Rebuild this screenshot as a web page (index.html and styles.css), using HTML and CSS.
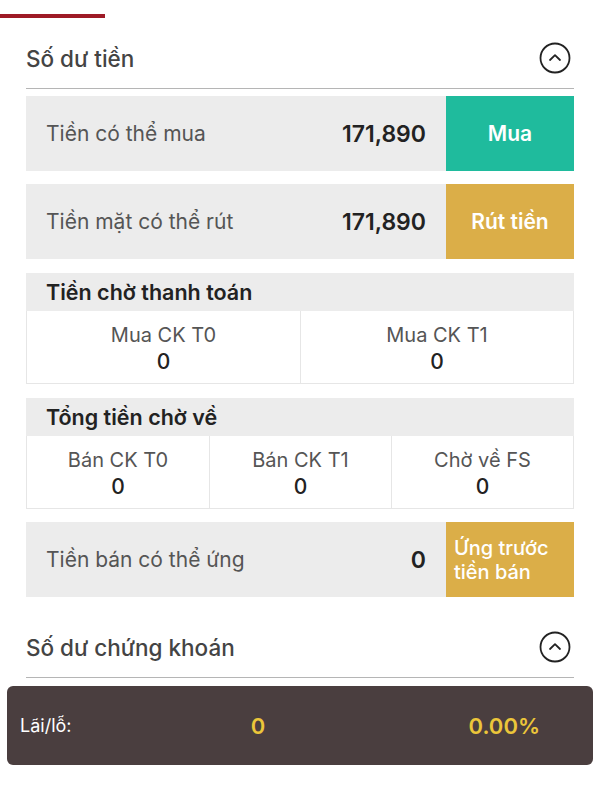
FILE: index.html
```html
<!DOCTYPE html>
<html lang="vi">
<head>
    <meta charset="UTF-8">
    <meta name="viewport" content="width=device-width, initial-scale=1.0">
    <title>Số dư tiền</title>
    <link rel="stylesheet" href="styles.css">
</head>
<body>
    <div class="tab-line"></div>

    <div class="section">
        <div class="section-head">
            <span>Số dư tiền</span>
            <svg class="toggle" width="32" height="32" viewBox="0 0 32 32">
                <circle cx="16" cy="16" r="14.5" fill="none" stroke="#222" stroke-width="1.8"/>
                <path d="M11 18 L16 13.2 L21 18" fill="none" stroke="#222" stroke-width="1.8" stroke-linecap="round" stroke-linejoin="round"/>
            </svg>
        </div>

        <div class="row">
            <div class="row-label">Tiền có thể mua</div>
            <div class="row-amount">171,890</div>
            <button class="btn btn-buy">Mua</button>
        </div>

        <div class="row">
            <div class="row-label">Tiền mặt có thể rút</div>
            <div class="row-amount">171,890</div>
            <button class="btn btn-gold">Rút tiền</button>
        </div>

        <div class="box">
            <div class="box-title">Tiền chờ thanh toán</div>
            <div class="box-body cols-2">
                <div class="cell">
                    <div class="cell-label">Mua CK T0</div>
                    <div class="cell-value">0</div>
                </div>
                <div class="cell">
                    <div class="cell-label">Mua CK T1</div>
                    <div class="cell-value">0</div>
                </div>
            </div>
        </div>

        <div class="box">
            <div class="box-title">Tổng tiền chờ về</div>
            <div class="box-body cols-3">
                <div class="cell">
                    <div class="cell-label">Bán CK T0</div>
                    <div class="cell-value">0</div>
                </div>
                <div class="cell">
                    <div class="cell-label">Bán CK T1</div>
                    <div class="cell-value">0</div>
                </div>
                <div class="cell">
                    <div class="cell-label">Chờ về FS</div>
                    <div class="cell-value">0</div>
                </div>
            </div>
        </div>

        <div class="row">
            <div class="row-label">Tiền bán có thể ứng</div>
            <div class="row-amount">0</div>
            <button class="btn btn-gold btn-wrap">Ứng trước tiền bán</button>
        </div>

        <div class="section-head second">
            <span>Số dư chứng khoán</span>
            <svg class="toggle" width="32" height="32" viewBox="0 0 32 32">
                <circle cx="16" cy="16" r="14.5" fill="none" stroke="#222" stroke-width="1.8"/>
                <path d="M11 18 L16 13.2 L21 18" fill="none" stroke="#222" stroke-width="1.8" stroke-linecap="round" stroke-linejoin="round"/>
            </svg>
        </div>
    </div>

    <div class="pl-bar">
        <div class="pl-label">Lãi/lỗ:</div>
        <div class="pl-value">0</div>
        <div class="pl-percent">0.00%</div>
    </div>
</body>
</html>
```

FILE: styles.css
```css
body {
    font-family: Inter, Roboto, "Liberation Sans", Arial, sans-serif;
    background-color: #fff;
    color: #222;
    margin: 0;
}
.tab-line {
    width: 105px;
    height: 4px;
    margin-top: 14px;
    background-color: #9e1a26;
}
.section {
    padding: 0 26px;
}
.section-head {
    display: flex;
    align-items: center;
    justify-content: space-between;
    height: 60px;
    margin-top: 10px;
    border-bottom: 1px solid #b5b5b5;
    font-size: 22.5px;
    font-weight: 500;
    color: #444;
}
.section-head.second {
    margin-top: 20px;
}
.toggle {
    margin-right: 3px;
}
.row {
    display: flex;
    height: 75px;
    margin-top: 13px;
    background-color: #ececec;
}
.section-head + .row {
    margin-top: 7px;
}
.row-label {
    flex: 1;
    display: flex;
    align-items: center;
    padding-left: 20px;
    font-size: 21px;
    color: #555;
}
.row-amount {
    display: flex;
    align-items: center;
    padding-right: 20px;
    font-size: 23px;
    font-weight: 600;
    color: #222;
}
.btn {
    width: 128px;
    border: none;
    font-family: inherit;
    font-size: 21px;
    font-weight: 600;
    color: #fff;
    cursor: pointer;
}
.btn-buy {
    background-color: #1fbb9d;
}
.btn-gold {
    background-color: #dbae48;
}
.btn-wrap {
    text-align: left;
    padding: 0 8px;
    font-size: 20px;
    font-weight: 500;
    line-height: 24px;
}
.box {
    margin-top: 14px;
}
.box-title {
    height: 38px;
    line-height: 38px;
    padding-left: 20px;
    background-color: #ececec;
    font-size: 21.5px;
    font-weight: 600;
    color: #222;
}
.box-body {
    display: grid;
    border: 1px solid #e6e6e6;
    border-top: none;
}
.cols-2 {
    grid-template-columns: 1fr 1fr;
}
.cols-3 {
    grid-template-columns: 1fr 1fr 1fr;
}
.cell {
    text-align: center;
    padding: 11px 0 7px;
    border-left: 1px solid #e6e6e6;
}
.cell:first-child {
    border-left: none;
}
.cell-label {
    font-size: 20px;
    line-height: 26px;
    color: #555;
}
.cell-value {
    font-size: 21px;
    line-height: 28px;
    font-weight: 500;
    color: #222;
}
.pl-bar {
    display: flex;
    align-items: center;
    height: 79px;
    margin: 8px 7px 0;
    padding-left: 13px;
    background-color: #4a3e3f;
    border-radius: 6px;
}
.pl-label {
    width: 167px;
    font-size: 18px;
    color: #fff;
}
.pl-value {
    width: 142px;
    text-align: center;
    font-size: 22px;
    font-weight: 600;
    color: #ecc63a;
}
.pl-percent {
    flex: 1;
    text-align: right;
    padding-right: 53px;
    font-size: 22px;
    font-weight: 600;
    color: #ecc63a;
}
```
